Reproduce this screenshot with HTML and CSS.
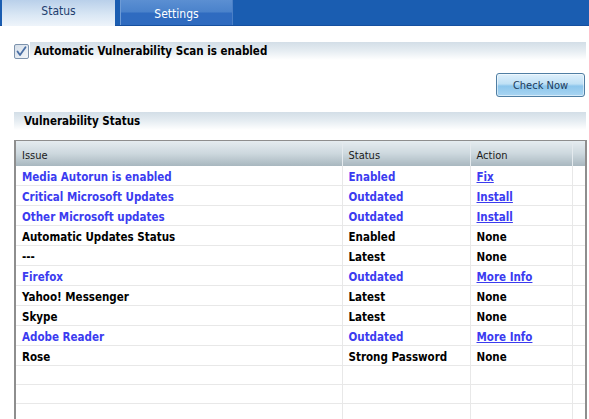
FILE: index.html
```html
<!DOCTYPE html>
<html>
<head>
<meta charset="utf-8">
<link rel="stylesheet" href="styles.css">
</head>
<body>
<div class="tabs">
  <div class="tab tab-active">Status</div>
  <div class="tab tab-idle">Settings</div>
</div>
<div class="content">
  <div class="scanrow">
    <svg class="chk" width="15" height="15" viewBox="0 0 15 15">
      <defs>
        <linearGradient id="cg" x1="0" y1="0" x2="1" y2="1">
          <stop offset="0" stop-color="#d4dde8"/>
          <stop offset="1" stop-color="#f4f7fa"/>
        </linearGradient>
      </defs>
      <rect x="0.5" y="0.5" width="14" height="14" rx="1.5" fill="url(#cg)" stroke="#7d93ad"/>
      <path d="M3.5 7.5 L6 11 L11.5 3.2" fill="none" stroke="#4a6fa5" stroke-width="1.8" stroke-linecap="round" stroke-linejoin="round"/>
    </svg>
    <div class="scanbar">Automatic Vulnerability Scan is enabled</div>
  </div>
  <div class="btnrow">
    <button class="btn">Check Now</button>
  </div>
  <div class="section">Vulnerability Status</div>
  <div class="tablebox">
    <table class="grid">
      <thead>
        <tr><th class="c1">Issue</th><th class="c2">Status</th><th class="c3">Action</th><th class="c4"></th></tr>
      </thead>
      <tbody>
        <tr class="blue"><td>Media Autorun is enabled</td><td>Enabled</td><td><a class="lnk">Fix</a></td><td></td></tr>
        <tr class="blue"><td>Critical Microsoft Updates</td><td>Outdated</td><td><a class="lnk">Install</a></td><td></td></tr>
        <tr class="blue"><td>Other Microsoft updates</td><td>Outdated</td><td><a class="lnk">Install</a></td><td></td></tr>
        <tr><td>Automatic Updates Status</td><td>Enabled</td><td>None</td><td></td></tr>
        <tr><td>---</td><td>Latest</td><td>None</td><td></td></tr>
        <tr class="blue"><td>Firefox</td><td>Outdated</td><td><a class="lnk">More Info</a></td><td></td></tr>
        <tr><td>Yahoo! Messenger</td><td>Latest</td><td>None</td><td></td></tr>
        <tr><td>Skype</td><td>Latest</td><td>None</td><td></td></tr>
        <tr class="blue"><td>Adobe Reader</td><td>Outdated</td><td><a class="lnk">More Info</a></td><td></td></tr>
        <tr><td>Rose</td><td>Strong Password</td><td>None</td><td></td></tr>
        <tr><td></td><td></td><td></td><td></td></tr>
        <tr><td></td><td></td><td></td><td></td></tr>
        <tr><td></td><td></td><td></td><td></td></tr>
      </tbody>
    </table>
  </div>
</div>
</body>
</html>
```

FILE: styles.css
```css
html, body {
  margin: 0;
  padding: 0;
  background: #ffffff;
  overflow: hidden;
}
body {
  width: 589px;
  height: 419px;
  font-family: "DejaVu Sans Condensed", "DejaVu Sans", sans-serif;
  font-size: 11px;
  color: #000;
}
.tabs {
  display: flex;
  height: 26px;
  background: #1a5db1;
  border-bottom: 1px solid #1650a0;
  box-sizing: border-box;
  padding-left: 2px;
}
.tab {
  width: 113px;
  display: flex;
  justify-content: center;
  box-sizing: border-box;
  font-size: 12px;
}
.tab-active {
  background: linear-gradient(#b9d0ea, #dbe8f5 60%, #eef4fa);
  color: #1d3e6e;
  padding-top: 4px;
  height: 26px;
}
.tab-idle {
  margin-left: 5px;
  background: linear-gradient(#5b8fd2, #4a82cb 48%, #2f6bc0 52%, #2f6bbf);
  color: #ffffff;
  padding-top: 7px;
  border-left: 1px solid #6d9bd6;
  border-right: 1px solid #4a7fc6;
  height: 25px;
}
.content {
  padding: 0 2px 0 14px;
}
.scanrow {
  display: flex;
  align-items: center;
  margin-top: 16px;
  height: 18px;
}
.chk {
  display: block;
  flex: none;
}
.scanbar {
  flex: 1;
  margin-left: 1px;
  height: 18px;
  line-height: 19px;
  padding-left: 4px;
  font-weight: bold;
  font-size: 11.5px;
  background: linear-gradient(#d3dee7, #e6edf2 50%, #ffffff);
  margin-right: 1px;
}
.btnrow {
  display: flex;
  justify-content: flex-end;
  margin-top: 13px;
  padding-right: 2px;
}
.btn {
  width: 89px;
  height: 24px;
  border: 1px solid #4f7ea3;
  border-radius: 3px;
  background: linear-gradient(#dff0fb, #bfe0f5 45%, #8cc6ec 55%, #a9d5f2);
  font-family: "DejaVu Sans Condensed", "DejaVu Sans", sans-serif;
  font-size: 11px;
  color: #1b3a5c;
  padding: 0;
  box-shadow: inset 0 0 0 1px rgba(255,255,255,0.5);
}
.section {
  margin-top: 15px;
  height: 18px;
  line-height: 19px;
  padding-left: 10px;
  font-weight: bold;
  font-size: 11.5px;
  background: linear-gradient(#d3dee7, #e6edf2 50%, #ffffff);
  margin-right: 1px;
}
.tablebox {
  margin-top: 10px;
  width: 573px;
  border: 2px solid #8e8e8e;
  border-top-width: 1px;
  border-bottom: none;
  box-sizing: border-box;
}
.grid {
  border-collapse: collapse;
  width: 100%;
  table-layout: fixed;
}
.grid th {
  height: 25px;
  padding: 3px 0 0 6px;
  text-align: left;
  font-weight: normal;
  color: #1a1a1a;
  background: linear-gradient(#e5ecf0, #cdd8de 50%, #a8b7bf);
  border-right: 1px solid #e4eaee;
  box-sizing: border-box;
}
.grid th.c1 { width: 326px; }
.grid th.c2 { width: 128px; }
.grid th.c3 { width: 102px; }
.grid th.c4 { border-right: none; }
.grid td {
  height: 19px;
  padding: 3px 0 0 6px;
  box-sizing: border-box;
  font-weight: bold;
  font-size: 11.5px;
  line-height: 16px;
  border-bottom: 1px solid #e8e8e8;
  border-right: 1px solid #e8e8e8;
  white-space: nowrap;
  overflow: hidden;
  vertical-align: top;
}
.grid td:last-child { border-right: none; }
.grid tr.blue td { color: #3b3bf0; }
.lnk {
  color: #3b3bf0;
  text-decoration: underline;
}
```
